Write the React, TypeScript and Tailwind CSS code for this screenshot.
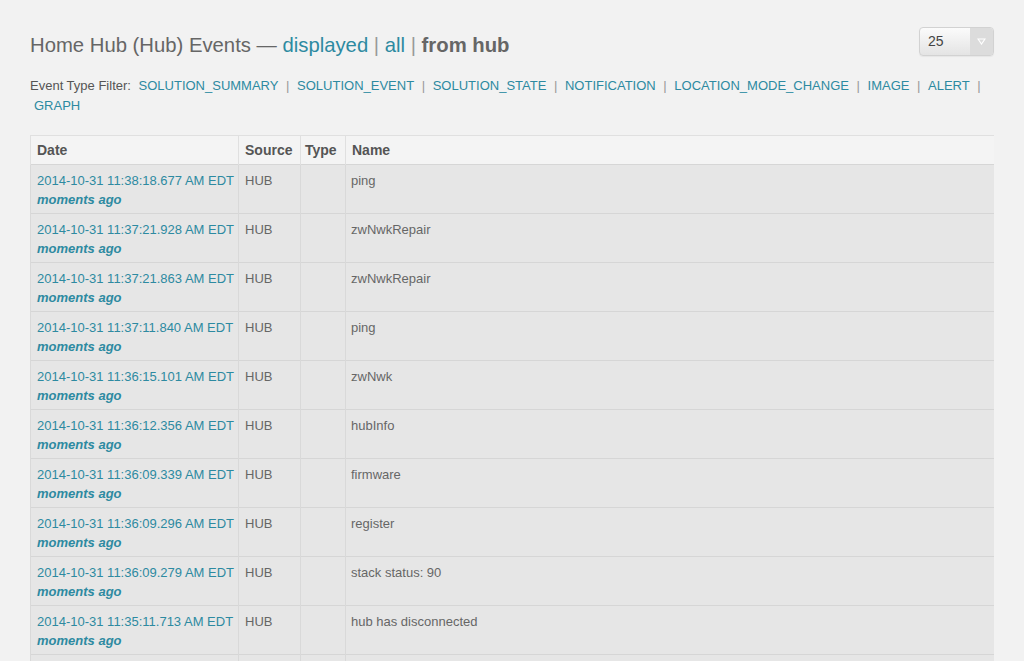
import React from "react";

const rows = [
  ["2014-10-31 11:38:18.677 AM EDT", "ping"],
  ["2014-10-31 11:37:21.928 AM EDT", "zwNwkRepair"],
  ["2014-10-31 11:37:21.863 AM EDT", "zwNwkRepair"],
  ["2014-10-31 11:37:11.840 AM EDT", "ping"],
  ["2014-10-31 11:36:15.101 AM EDT", "zwNwk"],
  ["2014-10-31 11:36:12.356 AM EDT", "hubInfo"],
  ["2014-10-31 11:36:09.339 AM EDT", "firmware"],
  ["2014-10-31 11:36:09.296 AM EDT", "register"],
  ["2014-10-31 11:36:09.279 AM EDT", "stack status: 90"],
  ["2014-10-31 11:35:11.713 AM EDT", "hub has disconnected"],
];

const filters = [
  "SOLUTION_SUMMARY",
  "SOLUTION_EVENT",
  "SOLUTION_STATE",
  "NOTIFICATION",
  "LOCATION_MODE_CHANGE",
  "IMAGE",
  "ALERT",
];

export default function App() {
  return (
    <div
      className="h-[661px] w-[1024px] overflow-hidden bg-[#f2f2f2] pl-[30px] pr-[30px] text-[#555]"
      style={{ fontFamily: '"Liberation Sans", Arial, sans-serif' }}
    >
      <div className="flex items-start justify-between pt-[27px]">
        <h1 className="pt-[5px] text-[20.3px] leading-[26px] font-light text-[#666]">
          Home Hub (Hub) Events — <a className="text-[#2d8aa1]">displayed</a>{" "}
          <span className="text-[#999]">|</span> <a className="text-[#2d8aa1]">all</a>{" "}
          <span className="text-[#999]">|</span> <b className="font-bold text-[#666]">from hub</b>
        </h1>
        <div className="flex h-[29px] w-[75px] overflow-hidden rounded-[4px] border border-[#d2d2d2] bg-gradient-to-b from-[#fbfbfb] to-[#e4e4e4] shadow-[0_1px_1px_rgba(0,0,0,0.05)]">
          <div className="flex flex-1 items-center pl-[8px] text-[14px] text-[#444]">25</div>
          <div className="flex w-[23px] items-center justify-center bg-[#dcdcdc]">
            <svg width="9" height="7" viewBox="0 0 9 7">
              <path d="M1 1 L4.5 6 L8 1 Z" fill="none" stroke="#fff" strokeWidth="1.2" />
            </svg>
          </div>
        </div>
      </div>

      <div className="mt-[18px] text-[13px] leading-[20px] text-[#555]">
        Event Type Filter:{" "}
        {filters.map((f) => (
          <React.Fragment key={f}>
            <a className="px-[4px] text-[#2d8aa1]">{f}</a>
            <span className="text-[#999]"> | </span>
          </React.Fragment>
        ))}
        <a className="px-[4px] text-[#2d8aa1]">GRAPH</a>
      </div>

      <table className="mt-[19px] w-[964px] table-fixed border-collapse text-[13px]">
        <colgroup>
          <col className="w-[208px]" />
          <col className="w-[62px]" />
          <col className="w-[45px]" />
          <col />
        </colgroup>
        <thead>
          <tr className="bg-[#f4f4f4] text-left text-[14px] font-bold text-[#555]">
            <th className="h-[29px] border-t border-l border-[#e0e0e0] px-[6px] py-0 align-middle">Date</th>
            <th className="border-t border-l border-[#e0e0e0] px-[6px] align-middle">Source</th>
            <th className="border-t border-l border-[#e0e0e0] px-[4px] align-middle">Type</th>
            <th className="border-t border-l border-[#e0e0e0] px-[6px] align-middle">Name</th>
          </tr>
        </thead>
        <tbody className="bg-[#e6e6e6]">
          {rows.map(([d, n], i) => (
            <tr key={i} className="border-t border-[#d6d6d6]">
              <td className="border-l border-[#d9d9d9] px-[6px] pt-[6px] pb-[4px] align-top leading-[19px]">
                <div className="whitespace-nowrap text-[#2d8aa1]">{d}</div>
                <div className="font-bold italic text-[#2d8aa1]">moments ago</div>
              </td>
              <td className="border-l border-[#d9d9d9] px-[6px] pt-[6px] align-top leading-[19px] text-[#666]">HUB</td>
              <td className="border-l border-[#d9d9d9] px-[6px] pt-[6px] align-top"></td>
              <td className="border-l border-[#d9d9d9] px-[5px] pt-[6px] align-top leading-[19px] text-[#666]">{n}</td>
            </tr>
          ))}
          <tr className="border-t border-[#d6d6d6]">
            <td className="h-[48px] border-l border-[#d9d9d9]"></td>
            <td className="border-l border-[#d9d9d9]"></td>
            <td className="border-l border-[#d9d9d9]"></td>
            <td className="border-l border-[#d9d9d9]"></td>
          </tr>
        </tbody>
      </table>
    </div>
  );
}
